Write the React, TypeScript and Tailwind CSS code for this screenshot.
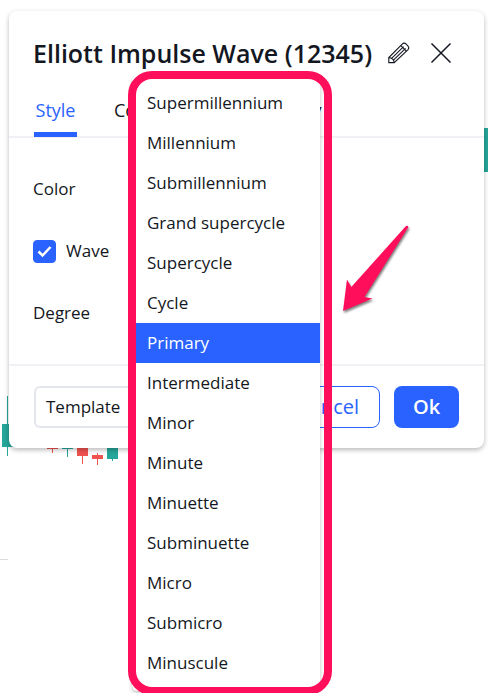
import { useState } from "react";
import clsx from "clsx";

const degrees = [
  "Supermillennium",
  "Millennium",
  "Submillennium",
  "Grand supercycle",
  "Supercycle",
  "Cycle",
  "Primary",
  "Intermediate",
  "Minor",
  "Minute",
  "Minuette",
  "Subminuette",
  "Micro",
  "Submicro",
  "Minuscule",
];

const tabs = ["Style", "Coordinates", "Visibility"];

function ChartBackground() {
  return (
    <>
      <svg className="absolute left-0 top-0" width="130" height="600" aria-hidden="true" shapeRendering="crispEdges">
        <g fill="#26a69a">
          <rect x="7" y="396" width="1" height="60" />
          <rect x="2" y="424" width="12" height="23" />
          <rect x="67" y="440" width="1" height="17" />
          <rect x="62" y="440" width="11" height="9" />
          <rect x="112" y="440" width="1" height="21" />
          <rect x="107" y="440" width="11" height="19" />
        </g>
        <g fill="#ef5350">
          <rect x="52" y="440" width="1" height="13" />
          <rect x="47" y="440" width="11" height="9" />
          <rect x="82" y="440" width="1" height="24" />
          <rect x="77" y="440" width="11" height="16" />
          <rect x="97" y="453" width="1" height="12" />
          <rect x="92" y="455" width="11" height="4" />
        </g>
        <rect x="0" y="559" width="8" height="1" fill="#dcdcdc" />
      </svg>
      <div className="absolute right-0 top-32 h-11 w-3 bg-[#26a69a]" />
    </>
  );
}

function PencilIcon() {
  return (
    <svg width="22" height="22" viewBox="0 0 22 22" fill="none" stroke="currentColor" strokeWidth="1.1" aria-hidden="true">
      <path d="M.8 20.6v-5L14.2 2.200c1.300-1.300 2.700-1.300 4 0l1.600 1.600c1.300 1.300 1.300 2.700 0 4L6.200 20.600z" />
      <path d="M.8 15.600c3 0 5.400 2.300 5.400 5M3.600 16.300L15.600 4.600M5.400 18.100L17.600 6.300M12.800 3.600l5.600 5.600" />
    </svg>
  );
}

function DegreeMenu() {
  const [selected, setSelected] = useState("Primary");

  return (
    <div className="absolute left-32 top-[71px] w-[204px] pb-1 pl-1 pr-3 pt-1">
      <div role="listbox" aria-label="Degree" className="rounded-md bg-white py-2 shadow-[0_2px_4px_rgba(0,0,0,0.25)]">
        {degrees.map((degree) => (
          <button
            key={degree}
            type="button"
            role="option"
            aria-selected={degree === selected}
            onClick={() => setSelected(degree)}
            className={clsx(
              "flex h-10 w-full items-center whitespace-nowrap pl-[15px] text-[17px]",
              degree === selected ? "bg-[#2962ff] text-white" : "text-[#131722]",
            )}
          >
            {degree}
          </button>
        ))}
      </div>
      <div className="pointer-events-none absolute inset-0 rounded-3xl border-8 border-[#ff0f5b]" />
    </div>
  );
}

function Arrow() {
  return (
    <svg
      className="pointer-events-none absolute left-[338px] top-[220px] drop-shadow-[1px_2px_1px_rgba(0,0,0,0.5)]"
      width="78"
      height="98"
      aria-hidden="true"
    >
      <path d="M5 91L9 59.5L13.3 67L67.5 6.5Q69.500 5 70.500 7L26.500 77L34.500 78.500Z" fill="#ff0f5b" />
    </svg>
  );
}

export default function App() {
  const [tab, setTab] = useState("Style");
  const [wave, setWave] = useState(true);

  return (
    <main className="relative min-h-screen overflow-hidden bg-white pl-[9px] pr-1 pt-[11px] font-['Trebuchet_MS','Open_Sans',sans-serif] text-[#131722]">
      <ChartBackground />

      <section
        role="dialog"
        aria-labelledby="dialog-title"
        className="relative rounded-lg bg-white shadow-[0_2px_5px_rgba(0,0,0,0.28)]"
      >
        <header className="flex items-center pl-6 pr-8 pt-6">
          <h1 id="dialog-title" className="whitespace-nowrap text-[25px]/9 font-semibold">
            Elliott Impulse Wave (12345)
          </h1>
          <div className="ml-auto flex items-center gap-5">
            <button type="button" aria-label="Rename">
              <PencilIcon />
            </button>
            <button type="button" aria-label="Close">
              <svg width="22" height="22" viewBox="0 0 22 22" stroke="currentColor" strokeWidth="1.5" aria-hidden="true">
                <path d="M1.5 1.5l19 19M20.5 1.5l-19 19" />
              </svg>
            </button>
          </div>
        </header>

        <nav role="tablist" className="flex gap-[37px] border-b-2 border-[#f0f1f5] px-[25px] pt-4">
          {tabs.map((name) => (
            <button
              key={name}
              type="button"
              role="tab"
              aria-selected={name === tab}
              onClick={() => setTab(name)}
              className={clsx(
                "-mb-px h-[50px] min-w-[43px] border-b-[5px] text-lg",
                name === tab ? "border-[#2962ff] text-[#2962ff]" : "border-transparent",
              )}
            >
              {name}
            </button>
          ))}
        </nav>

        <div className="px-6 py-5 text-[17px]">
          <div className="flex h-[62px] items-center">Color</div>
          <label className="flex h-[62px] items-center gap-2.5">
            <span className="relative flex">
              <input
                type="checkbox"
                checked={wave}
                onChange={(e) => setWave(e.target.checked)}
                className="size-[23px] appearance-none rounded border border-[#2962ff] checked:bg-[#2962ff]"
              />
              {wave && (
                <svg
                  className="pointer-events-none absolute inset-0"
                  width="23"
                  height="23"
                  fill="none"
                  stroke="#fff"
                  strokeWidth="2.5"
                  aria-hidden="true"
                >
                  <path d="M5.5 11.5l4 4 8-8.500" />
                </svg>
              )}
            </span>
            Wave
          </label>
          <div className="flex h-[62px] items-center">Degree</div>
        </div>

        <footer className="flex items-center border-t-2 border-[#f0f1f5] px-[25px] py-5">
          <button type="button" className="h-[42px] w-36 rounded-md border-2 border-[#e4e6ee] pl-2.5 text-left text-[17px]">
            Template
          </button>
          <button
            type="button"
            className="ml-auto h-[42px] rounded-lg border border-[#2962ff] px-5 text-xl text-[#2962ff]"
          >
            Cancel
          </button>
          <button type="button" className="ml-3.5 h-[42px] w-[65px] rounded-lg bg-[#2962ff] text-xl font-semibold text-white">
            Ok
          </button>
        </footer>
      </section>

      <DegreeMenu />
      <Arrow />
    </main>
  );
}
